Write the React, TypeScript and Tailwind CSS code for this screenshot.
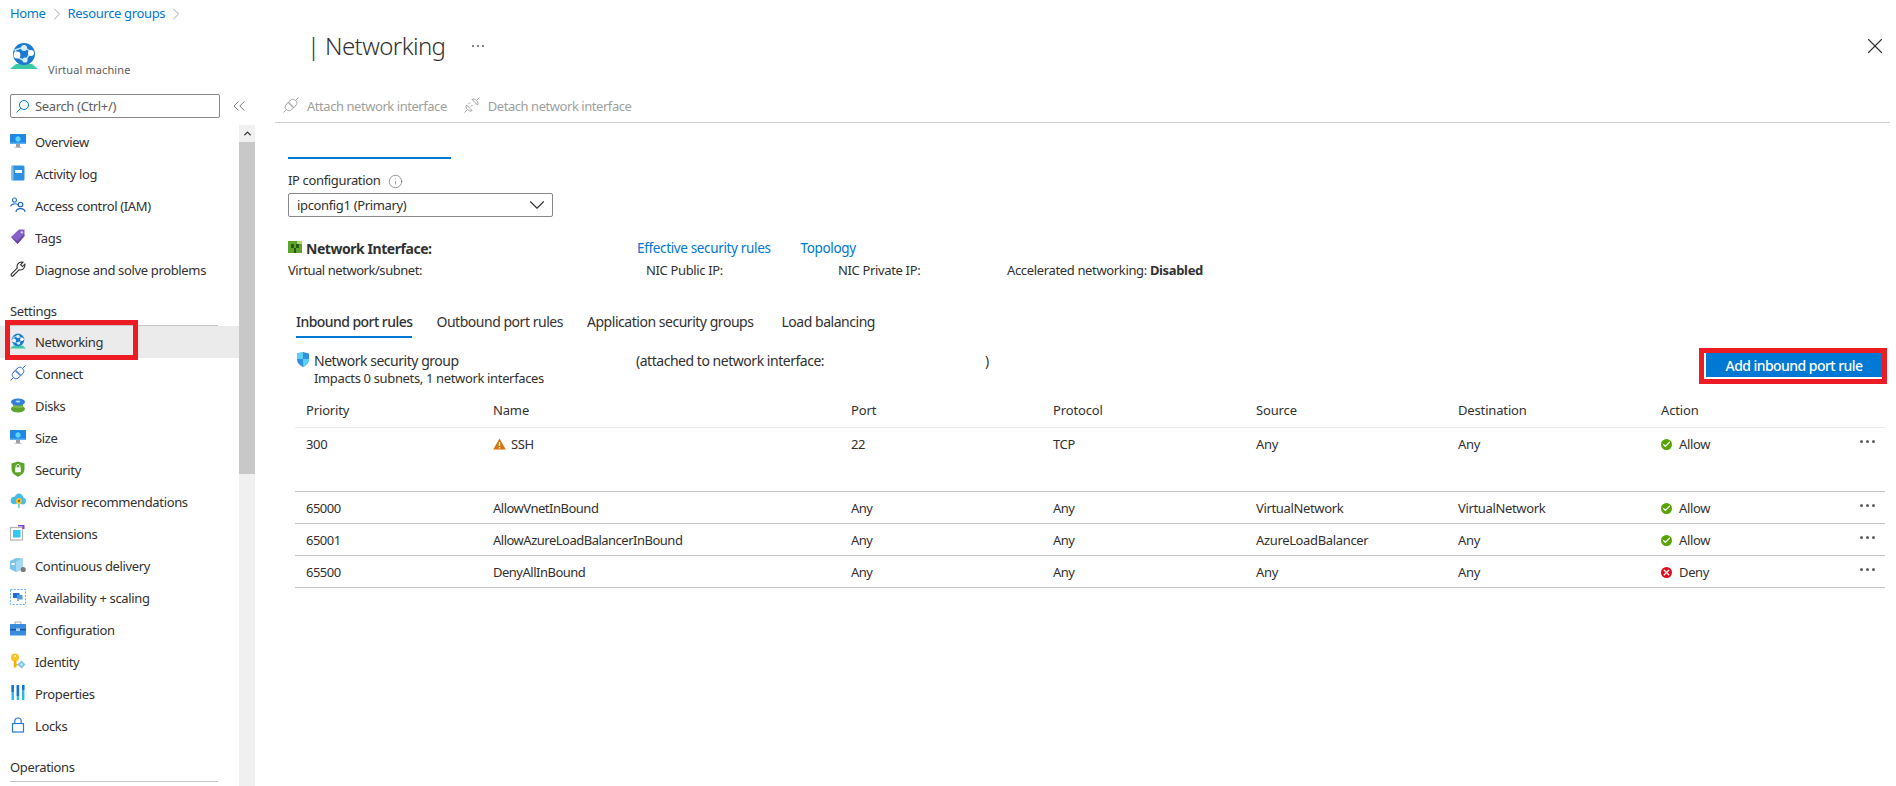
import React from 'react';
import { ChevronRight, ChevronUp, ChevronDown, ChevronsLeft, X, Info, Check } from 'lucide-react';

// --- icons (drawn by hand, none of these are in the icon packages) ---

function GlobeIcon({ size = 16 }: { size?: number }) {
  return (
    <svg width={size} height={size} viewBox="0 0 28 28">
      <path d="M0 27 L6 22 H22 L28 27 Z" fill="#3cc9a8" />
      <circle cx="14" cy="12" r="11" fill="#1b7ad0" />
      <path d="M5 8 L14 5 L21 10 L15 19 L7 15 Z" fill="none" stroke="#bfe3f7" strokeWidth="1.5" />
      <circle cx="14" cy="6" r="3" fill="#d9eefb" />
      <circle cx="21" cy="11" r="3" fill="#ffffff" />
      <circle cx="7" cy="13" r="3.4" fill="#ffffff" />
      <circle cx="15" cy="18" r="2.6" fill="#d9eefb" />
    </svg>
  );
}

function MonitorIcon({ cube = '#5ed4f3' }: { cube?: string }) {
  return (
    <svg width="16" height="16" viewBox="0 0 16 16">
      <rect x="0" y="1" width="16" height="10" rx="0.5" fill="#1e88e5" />
      <rect x="0" y="9.5" width="16" height="1.5" fill="#5aaef0" />
      <rect x="6" y="11" width="4" height="3" fill="#9aa0a6" />
      <rect x="4.5" y="14" width="7" height="1" fill="#c4c7ca" />
      <path d="M8 3 L10.5 4.5 V7.5 L8 9 L5.5 7.5 V4.5 Z" fill={cube} />
    </svg>
  );
}

function LogIcon() {
  return (
    <svg width="16" height="16" viewBox="0 0 16 16">
      <rect x="1.5" y="0.5" width="13" height="15" rx="1.5" fill="#2f8fe0" />
      <rect x="1.5" y="0.5" width="2" height="15" fill="#7cc0f2" />
      <rect x="5" y="5" width="7" height="3" fill="#ffffff" />
    </svg>
  );
}

function PeopleIcon() {
  return (
    <svg width="16" height="16" viewBox="0 0 16 16" fill="none" stroke="#2b78d6" strokeWidth="1.1">
      <circle cx="4.5" cy="3" r="2" />
      <path d="M0.7 9.5 C1 6.5 7 6 8 8" />
      <circle cx="10.5" cy="7.5" r="2.3" stroke="#1b5fc0" />
      <path d="M6 15 C6.2 10.5 14.8 10.5 15 15" stroke="#1b5fc0" />
    </svg>
  );
}

function TagIcon() {
  return (
    <svg width="16" height="16" viewBox="0 0 16 16">
      <path d="M1 8 L9 0.5 H14.5 V7 L7.5 15 Z" fill="#8661c5" />
      <path d="M1 8 L7.5 15 L14.5 7 L14 5 L7 12 Z" fill="#6d45ae" />
      <circle cx="11.8" cy="3.4" r="1.1" fill="#e4d9f5" />
    </svg>
  );
}

function WrenchIcon() {
  return (
    <svg width="16" height="16" viewBox="0 0 16 16" fill="none" stroke="#323130" strokeWidth="1.1">
      <path d="M1.2 13.2 L7.2 7.2 C6.4 4 8.4 1 11.5 1 L13 1.2 L10.6 3.8 L12.4 5.6 L14.9 3.2 C15.4 6.6 12.6 9.6 9 8.9 L3 15 C2 15.6 0.7 14.3 1.2 13.2 Z" />
    </svg>
  );
}

function PlugIcon({ color = '#1b63d6', detached = false }: { color?: string; detached?: boolean }) {
  return (
    <svg width="16" height="16" viewBox="0 0 16 16" fill="none" stroke={color} strokeWidth="1">
      <path d="M0.5 15.5 L3.5 12.5 M12.5 3.5 L15.5 0.5" />
      {detached ? (
        <>
          <path d="M2.5 8 L8 13.5 C6.5 14.5 5 14 3.5 12.5 C2 11 1.5 9.5 2.5 8 Z" />
          <path d="M8 2.5 L13.5 8 C14.5 6.5 14 5 12.5 3.5 C11 2 9.5 1.5 8 2.5 Z" />
          <path d="M4.5 7 L6 5.5 M7 9.5 L8.5 8" />
        </>
      ) : (
        <>
          <path d="M5 5.5 L10.5 11 L7.5 13.5 C6 14 5 13.8 3.5 12.5 C2 11 2 10 2.5 8.5 Z" />
          <path d="M5.5 5 L8.5 2.5 C10 2 11 2.2 12.5 3.5 C14 5 14 6 13.5 7.5 L11 10.5 Z" />
        </>
      )}
    </svg>
  );
}

function DiskIcon() {
  return (
    <svg width="16" height="16" viewBox="0 0 16 16">
      <ellipse cx="8" cy="12" rx="7" ry="3.4" fill="#5ea42c" />
      <rect x="3" y="7" width="10" height="4" fill="#7ab648" />
      <ellipse cx="8" cy="5" rx="7" ry="3.4" fill="#2f7fd8" />
      <ellipse cx="8" cy="4.4" rx="2.4" ry="1" fill="#bcd9f5" />
    </svg>
  );
}

function ShieldLockIcon() {
  return (
    <svg width="16" height="16" viewBox="0 0 16 16">
      <path d="M8 0.5 L14.5 2.5 V8 C14.5 12 11 14.5 8 15.8 C5 14.5 1.5 12 1.5 8 V2.5 Z" fill="#5ea42c" />
      <rect x="5.2" y="6.2" width="5.6" height="5" rx="0.6" fill="#ffffff" />
      <path d="M6.2 6.2 V5 C6.2 3 9.8 3 9.8 5 V6.2" stroke="#ffffff" strokeWidth="1" fill="none" />
    </svg>
  );
}

function AdvisorIcon() {
  return (
    <svg width="16" height="16" viewBox="0 0 16 16">
      <circle cx="4.5" cy="7.5" r="3.8" fill="#45bde8" />
      <circle cx="9" cy="5" r="4.4" fill="#45bde8" />
      <circle cx="12.5" cy="8" r="3.4" fill="#45bde8" />
      <circle cx="9" cy="8" r="3" fill="#f7c325" />
      <circle cx="9" cy="8" r="1.2" fill="#8a6d1c" />
      <rect x="8" y="11" width="2" height="4" fill="#7fd3ee" />
    </svg>
  );
}

function ExtensionIcon() {
  return (
    <svg width="16" height="16" viewBox="0 0 16 16">
      <rect x="0.5" y="2.5" width="12" height="12.5" fill="none" stroke="#b5b5b5" strokeWidth="1.2" />
      <rect x="3" y="5" width="7.5" height="7.5" fill="#32c8ef" />
      <rect x="12.5" y="0" width="2" height="4" fill="#7b45d6" />
      <rect x="8" y="0" width="6" height="1.4" fill="#7b45d6" />
    </svg>
  );
}

function DeliveryIcon() {
  return (
    <svg width="16" height="16" viewBox="0 0 16 16">
      <path d="M0 4 L6 1 L13 1.5 V12 L6 15 L0 12 Z" fill="#7cc4ea" />
      <path d="M6 4.5 L13 1.5 V12 L6 15 Z" fill="#a5d8f2" />
      <rect x="1.5" y="6" width="3" height="2" fill="#ffffff" />
      <circle cx="13.2" cy="12.5" r="2.6" fill="#7a7a7a" />
    </svg>
  );
}

function ScaleIcon() {
  return (
    <svg width="16" height="16" viewBox="0 0 16 16">
      <rect x="0.5" y="0.5" width="15" height="15" fill="none" stroke="#64b0ee" strokeWidth="1" strokeDasharray="2 1.4" />
      <rect x="3" y="4" width="6.5" height="5" fill="#1b6fd0" />
      <rect x="7" y="6" width="5.5" height="4.5" fill="#4b9be8" />
      <rect x="7" y="10.5" width="2" height="1.5" fill="#9aa0a6" />
    </svg>
  );
}

function ToolboxIcon() {
  return (
    <svg width="16" height="16" viewBox="0 0 16 16">
      <path d="M5 3.5 V1 H11 V3.5" fill="none" stroke="#a8a8a8" strokeWidth="1" />
      <rect x="0" y="3" width="16" height="11.5" rx="0.5" fill="#3a8be0" />
      <rect x="0" y="8" width="16" height="1.4" fill="#17509e" />
      <rect x="6" y="7.4" width="4" height="2.6" fill="#a9d3f6" />
    </svg>
  );
}

function KeyIcon() {
  return (
    <svg width="16" height="16" viewBox="0 0 16 16">
      <circle cx="5" cy="4.5" r="4" fill="#f7c325" />
      <circle cx="5" cy="3" r="1" fill="#fff4c2" />
      <rect x="3.8" y="7.5" width="2.6" height="7" fill="#eab308" />
      <rect x="6" y="11" width="2" height="1.4" fill="#eab308" />
      <path d="M11.5 7.5 L15.5 11.5 L11.5 15.5 L7.5 11.5 Z" fill="#7fc4e8" />
      <path d="M11.5 10 L13 11.5 L11.5 13 L10 11.5 Z" fill="#d5edf9" />
    </svg>
  );
}

function PropertiesIcon() {
  return (
    <svg width="16" height="16" viewBox="0 0 16 16">
      <rect x="1.5" y="0" width="2.4" height="15" fill="#2bb8e8" />
      <rect x="6.7" y="0" width="2.4" height="15" fill="#2bb8e8" />
      <rect x="12" y="0" width="2.4" height="15" fill="#2bb8e8" />
      <rect x="1.5" y="0" width="2.4" height="7" fill="#1b6fd0" />
      <rect x="6.7" y="0" width="2.4" height="11" fill="#1b6fd0" />
      <rect x="12" y="0" width="2.4" height="5" fill="#1b6fd0" />
    </svg>
  );
}

function LockIcon() {
  return (
    <svg width="16" height="16" viewBox="0 0 16 16" fill="none" stroke="#2b78d6" strokeWidth="1.2">
      <rect x="2.5" y="6.5" width="11" height="8.5" />
      <path d="M4.8 6.5 V4 C4.8 0 11.2 0 11.2 4 V6.5" />
    </svg>
  );
}

function NicIcon() {
  return (
    <svg width="14" height="12" viewBox="0 0 14 12">
      <rect x="0" y="0" width="14" height="12" fill="#5ea42c" />
      <rect x="3" y="3" width="3" height="4" fill="#2a5a12" />
      <rect x="8" y="3" width="3" height="4" fill="#2a5a12" />
      <rect x="6" y="7" width="2" height="5" fill="#2a5a12" />
      <rect x="9" y="0" width="5" height="3" fill="#b5d77a" />
    </svg>
  );
}

function ShieldIcon() {
  return (
    <svg width="14" height="15" viewBox="0 0 14 15">
      <path d="M7 0 L13 1.5 V7 C13 11 10 13.5 7 15 C4 13.5 1 11 1 7 V1.5 Z" fill="#2f8fe0" />
      <path d="M7 0 L1 1.5 V7 H7 Z" fill="#5fd0f5" />
      <path d="M7 7 H13 C13 11 10 13.5 7 15 Z" fill="#5fd0f5" />
    </svg>
  );
}

function WarningIcon() {
  return (
    <svg width="13" height="12" viewBox="0 0 13 12">
      <path d="M6.5 0.5 L12.8 11.5 H0.2 Z" fill="#d9730d" />
      <rect x="5.8" y="4" width="1.4" height="4" fill="#ffffff" />
      <rect x="5.8" y="9" width="1.4" height="1.4" fill="#ffffff" />
    </svg>
  );
}

function SearchGlass() {
  return (
    <svg width="13" height="13" viewBox="0 0 13 13" fill="none" stroke="#0078d4" strokeWidth="1">
      <circle cx="8" cy="5" r="4.5" />
      <path d="M4.8 8.2 L0.5 12.5" />
    </svg>
  );
}

function ActionCell({ action }: { action: string }) {
  return (
    <div className="flex items-center gap-[7px]">
      {action === 'Allow' ? (
        <span className="flex h-[11px] w-[11px] items-center justify-center rounded-full bg-[#57a300]">
          <Check className="h-[9px] w-[9px] text-white" strokeWidth={3.5} />
        </span>
      ) : (
        <span className="flex h-[11px] w-[11px] items-center justify-center rounded-full bg-[#e00b1c]">
          <X className="h-[9px] w-[9px] text-white" strokeWidth={3.5} />
        </span>
      )}
      <span>{action}</span>
    </div>
  );
}

const topItems = [
  { label: 'Overview', icon: <MonitorIcon /> },
  { label: 'Activity log', icon: <LogIcon /> },
  { label: 'Access control (IAM)', icon: <PeopleIcon /> },
  { label: 'Tags', icon: <TagIcon /> },
  { label: 'Diagnose and solve problems', icon: <WrenchIcon /> },
];

const settingsItems = [
  { label: 'Connect', icon: <PlugIcon /> },
  { label: 'Disks', icon: <DiskIcon /> },
  { label: 'Size', icon: <MonitorIcon /> },
  { label: 'Security', icon: <ShieldLockIcon /> },
  { label: 'Advisor recommendations', icon: <AdvisorIcon /> },
  { label: 'Extensions', icon: <ExtensionIcon /> },
  { label: 'Continuous delivery', icon: <DeliveryIcon /> },
  { label: 'Availability + scaling', icon: <ScaleIcon /> },
  { label: 'Configuration', icon: <ToolboxIcon /> },
  { label: 'Identity', icon: <KeyIcon /> },
  { label: 'Properties', icon: <PropertiesIcon /> },
  { label: 'Locks', icon: <LockIcon /> },
];

const rules = [
  { priority: '65000', name: 'AllowVnetInBound', port: 'Any', protocol: 'Any', source: 'VirtualNetwork', destination: 'VirtualNetwork', action: 'Allow' },
  { priority: '65001', name: 'AllowAzureLoadBalancerInBound', port: 'Any', protocol: 'Any', source: 'AzureLoadBalancer', destination: 'Any', action: 'Allow' },
  { priority: '65500', name: 'DenyAllInBound', port: 'Any', protocol: 'Any', source: 'Any', destination: 'Any', action: 'Deny' },
];

const gridCols = 'grid grid-cols-[187px_358px_202px_203px_202px_203px_1fr] pl-[11px]';

function NavItem({ label, icon }: { label: string; icon: React.ReactNode }) {
  return (
    <div className="flex h-8 items-center gap-[9px] pl-[10px]">
      <span className="mb-[2px] flex h-4 w-4 shrink-0 items-center justify-center">{icon}</span>
      <span className="pt-[2px]">{label}</span>
    </div>
  );
}

function SectionHeader({ label }: { label: string }) {
  return (
    <div className="mr-[21px] ml-[10px] flex h-10 flex-col justify-end">
      <div className="pb-[5px] leading-[18px]">{label}</div>
      <div className="h-px bg-[#c8c6c4]" />
    </div>
  );
}

function MoreDots() {
  return (
    <div className="flex justify-end gap-[3px] pr-[10px]">
      <span className="h-[3px] w-[3px] rounded-full bg-[#605e5c]" />
      <span className="h-[3px] w-[3px] rounded-full bg-[#605e5c]" />
      <span className="h-[3px] w-[3px] rounded-full bg-[#605e5c]" />
    </div>
  );
}

export default function App() {
  return (
    <div className="flex h-[786px] w-[1896px] flex-col overflow-hidden bg-white font-['Noto_Sans',sans-serif] text-[13px] tracking-[-0.35px] text-[#323130]">
      {/* breadcrumb */}
      <div className="flex h-7 items-center gap-[1px] pl-[10px] text-[#0078d4]">
        <span>Home</span>
        <ChevronRight className="h-5 w-5 text-[#8a8886]" strokeWidth={0.9} />
        <span>Resource groups</span>
        <ChevronRight className="h-5 w-5 text-[#8a8886]" strokeWidth={0.9} />
      </div>

      <div className="flex min-h-0 flex-1">
        {/* left menu */}
        <div className="flex w-[256px] shrink-0 flex-col">
          <div className="flex h-[66px] pl-[10px] pt-[14px]">
            <GlobeIcon size={28} />
            <span className="ml-[10px] mt-[20px] text-[11px] tracking-[0.1px] text-[#605e5c]">Virtual machine</span>
          </div>
          <div className="flex items-center">
            <div className="ml-[10px] flex h-6 w-[210px] items-center gap-[6px] rounded-[2px] border border-[#8a8886] pl-[5px] text-[#605e5c]">
              <SearchGlass />
              <span className="pt-[2px]">Search (Ctrl+/)</span>
            </div>
            <ChevronsLeft className="ml-[9px] h-5 w-5 text-[#605e5c]" strokeWidth={1} />
          </div>
          <div className="mt-[7px] flex min-h-0 flex-1">
            <div className="w-[239px] shrink-0 pt-px">
              {topItems.map((item) => (
                <NavItem key={item.label} {...item} />
              ))}
              <SectionHeader label="Settings" />
              <div className="relative bg-[#ebebeb]">
                <NavItem label="Networking" icon={<GlobeIcon size={16} />} />
                <div className="absolute top-[-6px] left-[5px] h-10 w-[133px] border-[5px] border-[#ed1c24]" />
              </div>
              {settingsItems.map((item) => (
                <NavItem key={item.label} {...item} />
              ))}
              <SectionHeader label="Operations" />
            </div>
            <div className="flex w-[16px] flex-col bg-[#f0f0f0]">
              <div className="flex h-[17px] items-center justify-center">
                <ChevronUp className="h-[11px] w-[11px] text-[#323130]" strokeWidth={3} />
              </div>
              <div className="h-[332px] bg-[#c8c8c8]" />
            </div>
          </div>
        </div>

        {/* blade */}
        <div className="min-w-0 flex-1 pl-[19px]">
          <div className="flex h-9 items-center pr-[8px]">
            <span className="ml-[32px] text-[24px] leading-none tracking-[-0.6px] font-light">| Networking</span>
            <div className="ml-[27px] flex gap-[3px]">
              <span className="h-[2px] w-[2px] rounded-full bg-[#605e5c]" />
              <span className="h-[2px] w-[2px] rounded-full bg-[#605e5c]" />
              <span className="h-[2px] w-[2px] rounded-full bg-[#605e5c]" />
            </div>
            <X className="ml-auto h-[26px] w-[26px] text-[#323130]" strokeWidth={1} />
          </div>
          <div className="mr-[6px] flex h-[59px] items-end gap-[17px] border-b border-[#d2d0ce] pb-[7px] pl-[8px] tracking-[-0.45px] text-[#a19f9d]">
            <div className="flex items-center gap-[8px] leading-[18px]">
              <PlugIcon color="#a19f9d" />
              <span className="pt-[2px]">Attach network interface</span>
            </div>
            <div className="flex items-center gap-[8px] leading-[18px]">
              <PlugIcon color="#a19f9d" detached />
              <span className="pt-[2px]">Detach network interface</span>
            </div>
          </div>

          <div className="pl-[13px]">
            <div className="mt-[34px] h-[2px] w-[163px] bg-[#0078d4]" />
            <div className="mt-[13px] flex h-[18px] items-center gap-[8px]">
              <span>IP configuration</span>
              <Info className="h-[15px] w-[15px] text-[#605e5c]" strokeWidth={1} />
            </div>
            <div className="mt-[3px] flex h-6 w-[265px] items-center justify-between rounded-[2px] border border-[#8a8886] pr-[2px] pl-[8px]">
              <span className="pt-[2px]">ipconfig1 (Primary)</span>
              <ChevronDown className="h-[26px] w-[26px]" strokeWidth={1} />
            </div>

            <div className="mt-[22px] flex h-[18px] items-center">
              <div className="flex w-[349px] items-center gap-[4px]">
                <span className="mb-[3px] flex">
                  <NicIcon />
                </span>
                <span className="text-[14px] font-bold tracking-[-0.45px]">Network Interface:</span>
              </div>
              <span className="text-[13.5px] text-[#0078d4]">Effective security rules</span>
              <span className="ml-[30px] text-[13.5px] text-[#0078d4]">Topology</span>
            </div>
            <div className="mt-[4px] grid h-[18px] grid-cols-[358px_192px_169px_1fr] items-center">
              <span className="tracking-[-0.45px]">Virtual network/subnet:</span>
              <span>NIC Public IP:</span>
              <span>NIC Private IP:</span>
              <span>
                Accelerated networking: <span className="font-bold">Disabled</span>
              </span>
            </div>

            <div className="mt-[33px] ml-[8px] flex h-[18px] items-center gap-[24px] text-[14px] tracking-[-0.47px]">
              <div className="relative font-medium tracking-[-0.55px]">
                Inbound port rules
                <div className="absolute top-[25px] right-0 left-0 h-[2px] bg-[#0078d4]" />
              </div>
              <span>Outbound port rules</span>
              <span>Application security groups</span>
              <span className="ml-[4px]">Load balancing</span>
            </div>

            <div className="mt-[21px] ml-[8px] flex items-start justify-between pr-[8px]">
              <div>
                <div className="flex h-[18px] items-center text-[14px] tracking-[-0.47px]">
                  <span className="mb-[2px] w-[18px]">
                    <ShieldIcon />
                  </span>
                  <span className="w-[322px]">Network security group</span>
                  <span className="w-[349px]">(attached to network interface:</span>
                  <span>)</span>
                </div>
                <div className="pl-[18px] leading-[18px]">Impacts 0 subnets, 1 network interfaces</div>
              </div>
              <div className="relative mt-[2px] mr-[6px]">
                <div className="flex h-6 w-[176px] items-center justify-center bg-[#0078d4] text-[14px] font-medium tracking-[-0.55px] text-white">
                  Add inbound port rule
                </div>
                <div className="absolute top-[-5px] right-[-5px] bottom-[-7px] left-[-7px] border-[5px] border-[#ed1c24]" />
              </div>
            </div>

            <div className="mt-[8px] ml-[7px] w-[1590px]">
              <div className={`${gridCols} h-[33px] items-center border-b border-[#edebe9] tracking-[-0.15px]`}>
                <span>Priority</span>
                <span>Name</span>
                <span>Port</span>
                <span>Protocol</span>
                <span>Source</span>
                <span>Destination</span>
                <span>Action</span>
              </div>
              <div className={`${gridCols} h-[64px] items-start border-b border-[#c8c6c4] pt-[7px]`}>
                <span className="leading-[18px]">300</span>
                <div className="flex items-center gap-[5px] leading-[18px]">
                  <WarningIcon />
                  <span>SSH</span>
                </div>
                <span className="leading-[18px]">22</span>
                <span className="leading-[18px]">TCP</span>
                <span className="leading-[18px]">Any</span>
                <span className="leading-[18px]">Any</span>
                <div className="relative leading-[18px]">
                  <ActionCell action="Allow" />
                  <div className="absolute top-[5px] right-0 left-0">
                    <MoreDots />
                  </div>
                </div>
              </div>
              {rules.map((rule) => (
                <div key={rule.priority} className={`${gridCols} h-8 items-center border-b border-[#c8c6c4] pt-[2px] tracking-[-0.5px]`}>
                  <span>{rule.priority}</span>
                  <span>{rule.name}</span>
                  <span>{rule.port}</span>
                  <span>{rule.protocol}</span>
                  <span className="tracking-[-0.35px]">{rule.source}</span>
                  <span className="tracking-[-0.35px]">{rule.destination}</span>
                  <div className="relative tracking-[-0.35px]">
                    <ActionCell action={rule.action} />
                    <div className="absolute top-[5px] right-0 left-0">
                      <MoreDots />
                    </div>
                  </div>
                </div>
              ))}
            </div>
          </div>
        </div>
      </div>
    </div>
  );
}
